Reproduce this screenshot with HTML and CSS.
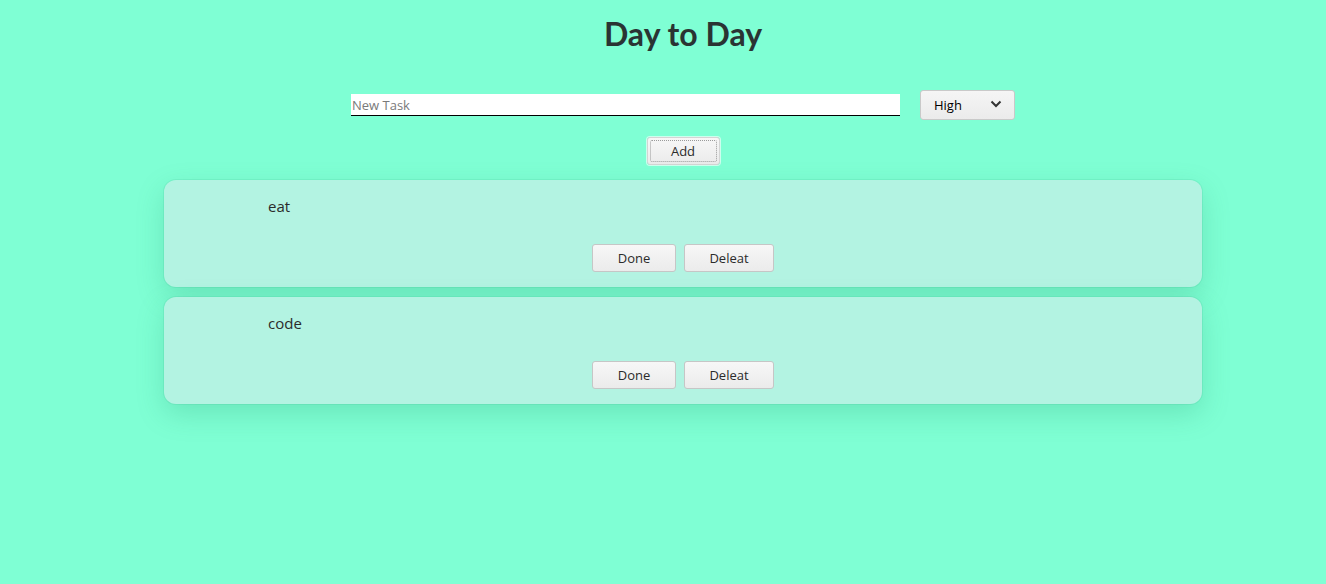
FILE: index.html
```html
<!DOCTYPE html>
<html>
<head>
<meta charset="utf-8">
<link rel="stylesheet" href="styles.css">
</head>
<body>
<div class="app">
  <h1 class="title">Day to Day</h1>
  <div class="form-row">
    <input class="task-input" type="text" placeholder="New Task">
    <div class="select">
      <span>High</span>
      <svg width="12" height="8" viewBox="0 0 12 8"><path d="M1.5 1.5 L6 6 L10.5 1.5" fill="none" stroke="#333" stroke-width="2"/></svg>
    </div>
  </div>
  <div class="add-row">
    <button class="btn add-btn"><span class="focus-ring">Add</span></button>
  </div>
  <div class="list">
    <div class="card">
      <div class="card-text">eat</div>
      <div class="card-actions">
        <button class="btn done-btn">Done</button>
        <button class="btn del-btn">Deleat</button>
      </div>
    </div>
    <div class="card">
      <div class="card-text">code</div>
      <div class="card-actions">
        <button class="btn done-btn">Done</button>
        <button class="btn del-btn">Deleat</button>
      </div>
    </div>
  </div>
</div>
</body>
</html>
```
FILE: styles.css
```css
html, body {
  margin: 0;
  padding: 0;
  background: #7fffd4;
  min-height: 100%;
}
body {
  font-family: "Open Sans", sans-serif;
  color: #2b2b2b;
}
.app {
  padding: 0 0 160px 40px;
  display: flex;
  flex-direction: column;
  align-items: center;
}
.title {
  font-family: Lato, sans-serif;
  font-weight: 700;
  font-size: 32px;
  color: #2a3433;
  margin: 15px 0 0 0;
  line-height: 38px;
}
.form-row {
  display: flex;
  align-items: center;
  gap: 20px;
  margin-top: 37px;
  height: 30px;
}
.task-input {
  width: 549px;
  height: 22px;
  box-sizing: border-box;
  border: none;
  border-bottom: 1px solid #000;
  background: #fff;
  padding: 0 1px;
  font-family: "Open Sans", sans-serif;
  font-size: 13px;
  outline: none;
}
.task-input::placeholder {
  color: #7a7a7a;
}
.select {
  width: 95px;
  height: 30px;
  box-sizing: border-box;
  border: 1px solid #c9c9c9;
  border-radius: 3px;
  background: linear-gradient(#f5f5f5, #ebebeb);
  display: flex;
  align-items: center;
  justify-content: space-between;
  padding: 0 12px 1px 13px;
  font-family: "Open Sans", sans-serif;
  font-size: 13px;
  color: #000;
}
.select svg {
  margin-top: -2px;
}
.add-row {
  margin-top: 17px;
  display: flex;
  height: 28px;
}
.btn {
  font-family: "Open Sans", sans-serif;
  font-size: 13px;
  color: #2b2b2b;
  height: 28px;
  box-sizing: border-box;
  border: 1px solid #c6c6c6;
  border-radius: 3px;
  background: linear-gradient(#f7f7f7, #ebebeb);
  padding: 0;
  cursor: pointer;
}
.add-btn {
  width: 73px;
  padding: 2px;
  border-color: #d4d4d4;
  box-shadow: 0 0 0 1px rgba(255, 255, 255, 0.6);
}
.focus-ring {
  display: flex;
  align-items: center;
  justify-content: center;
  height: 100%;
  border: 1px dotted #9a9a9a;
  border-radius: 2px;
  box-sizing: border-box;
}
.list {
  margin-top: 15px;
  display: flex;
  flex-direction: column;
  gap: 10px;
}
.card {
  width: 1038px;
  height: 107px;
  box-sizing: border-box;
  background: #b3f3e2;
  border-radius: 12px;
  box-shadow: 0 10px 28px rgba(30, 140, 100, 0.22), 0 0 0 1px rgba(60, 190, 150, 0.15);
  padding: 16px 0 15px 0;
  display: flex;
  flex-direction: column;
  justify-content: space-between;
}
.card-text {
  padding-left: 104px;
  font-family: "Open Sans", sans-serif;
  font-size: 15px;
  line-height: 20px;
  color: #2b2b2b;
}
.card-actions {
  display: flex;
  justify-content: center;
  gap: 8px;
}
.done-btn { width: 84px; }
.del-btn { width: 90px; }
```
